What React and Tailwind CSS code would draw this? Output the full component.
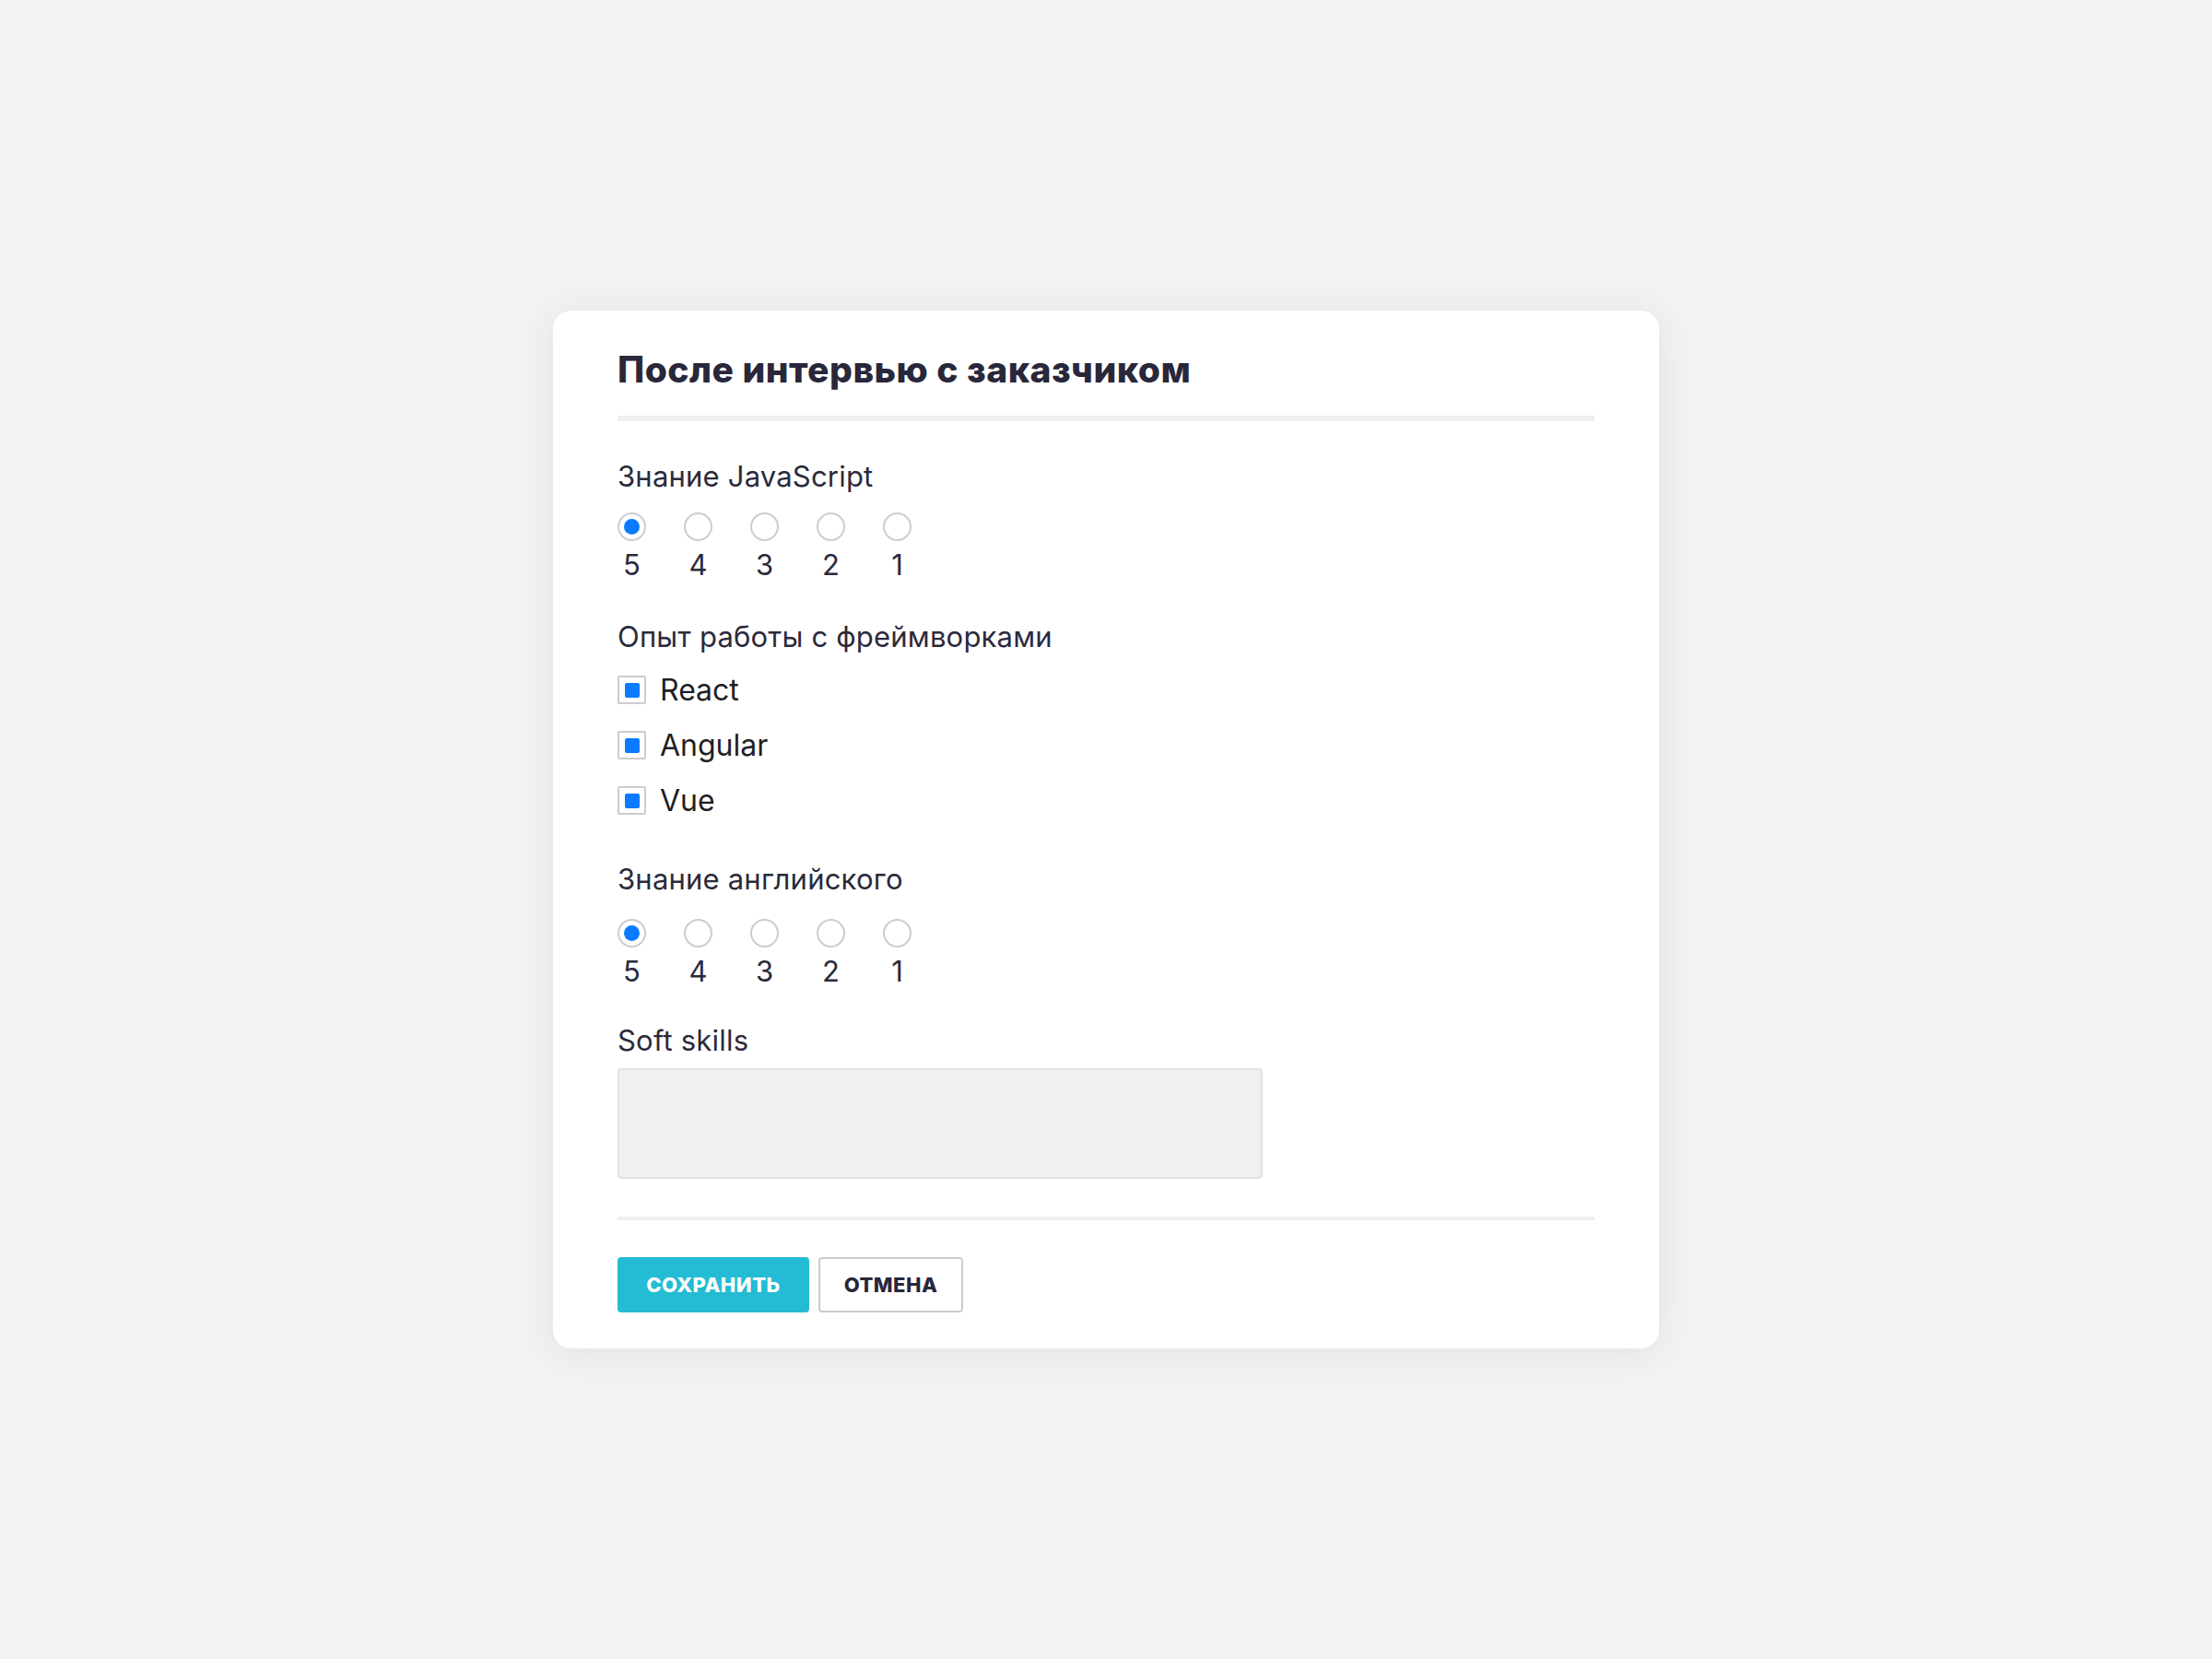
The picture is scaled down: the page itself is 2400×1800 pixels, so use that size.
import { useState } from "react";

const scale = [5, 4, 3, 2, 1];
const frameworks = ["React", "Angular", "Vue"];

function RadioScale({ value, onChange, className }) {
  return (
    <div className={`flex gap-[41px] ${className}`}>
      {scale.map((n) => (
        <button
          key={n}
          type="button"
          onClick={() => onChange(n)}
          className="flex w-[31px] flex-col items-center"
        >
          <span className="flex h-[31px] w-[31px] items-center justify-center rounded-full border-2 border-[#cdcdcd] bg-white">
            {value === n ? (
              <span className="h-[17px] w-[17px] rounded-full bg-[#0a7bff]" />
            ) : null}
          </span>
          <span className="mt-[8px] text-[31px] leading-[36px] text-[#2b2a3b]">{n}</span>
        </button>
      ))}
    </div>
  );
}

function Checkbox({ label, checked, onToggle }) {
  return (
    <button type="button" onClick={onToggle} className="flex h-[31px] items-center">
      <span className="flex h-[31px] w-[31px] items-center justify-center rounded-[2px] border-2 border-[#cdcdcd] bg-white">
        {checked ? <span className="h-[16px] w-[16px] rounded-[2px] bg-[#0a7bff]" /> : null}
      </span>
      <span className="ml-[15px] text-[32px] leading-[36px] text-[#1f1f24]">{label}</span>
    </button>
  );
}

function App() {
  const [js, setJs] = useState(5);
  const [english, setEnglish] = useState(5);
  const [picked, setPicked] = useState(frameworks);
  const [soft, setSoft] = useState("");

  const toggle = (name) => {
    setPicked((current) =>
      current.includes(name) ? current.filter((item) => item !== name) : [...current, name]
    );
  };

  return (
    <div
      className="flex min-h-screen items-center justify-center bg-[#f2f2f2]"
      style={{ fontFamily: "Inter, 'Noto Sans', sans-serif" }}
    >
      <div className="w-[1200px] rounded-[20px] bg-white px-[70px] pb-[39px] pt-[42px] shadow-[0_4px_40px_rgba(0,0,0,0.07)]">
        <h1 className="text-[39px] font-extrabold leading-[44px] tracking-[0.5px] text-[#29273a]">
          После интервью с заказчиком
        </h1>
        <div className="mt-[28px] h-[6px] bg-[#efefef]" />

        <p className="mt-[42px] text-[31px] leading-[36px] tracking-[0.2px] text-[#2b2a3b]">
          Знание JavaScript
        </p>
        <RadioScale value={js} onChange={setJs} className="mt-[21px]" />

        <p className="mt-[42px] text-[31px] leading-[36px] tracking-[0.2px] text-[#2b2a3b]">
          Опыт работы с фреймворками
        </p>
        <div className="mt-[24px] flex flex-col items-start gap-[29px]">
          {frameworks.map((name) => (
            <Checkbox
              key={name}
              label={name}
              checked={picked.includes(name)}
              onToggle={() => toggle(name)}
            />
          ))}
        </div>

        <p className="mt-[52px] text-[31px] leading-[36px] tracking-[0.2px] text-[#2b2a3b]">
          Знание английского
        </p>
        <RadioScale value={english} onChange={setEnglish} className="mt-[25px]" />

        <p className="mt-[39px] text-[31px] leading-[36px] tracking-[0.2px] text-[#2b2a3b]">
          Soft skills
        </p>
        <textarea
          value={soft}
          onChange={(event) => setSoft(event.target.value)}
          className="mt-[12px] block h-[120px] w-[700px] resize-none rounded-[4px] border-2 border-[#e2e2e2] bg-[#f0f0f0] p-3 text-[24px] outline-none"
        />

        <div className="mt-[41px] h-[4px] bg-[#efefef]" />

        <div className="mt-[40px] flex gap-[10px]">
          <button
            type="button"
            className="h-[60px] w-[208px] rounded-[4px] bg-[#23bcd4] text-[22px] font-extrabold tracking-[0.5px] text-white"
          >
            СОХРАНИТЬ
          </button>
          <button
            type="button"
            className="h-[60px] w-[157px] rounded-[4px] border-2 border-[#cccccc] bg-white text-[22px] font-extrabold tracking-[0.5px] text-[#29273a]"
          >
            ОТМЕНА
          </button>
        </div>
      </div>
    </div>
  );
}

export default App;
